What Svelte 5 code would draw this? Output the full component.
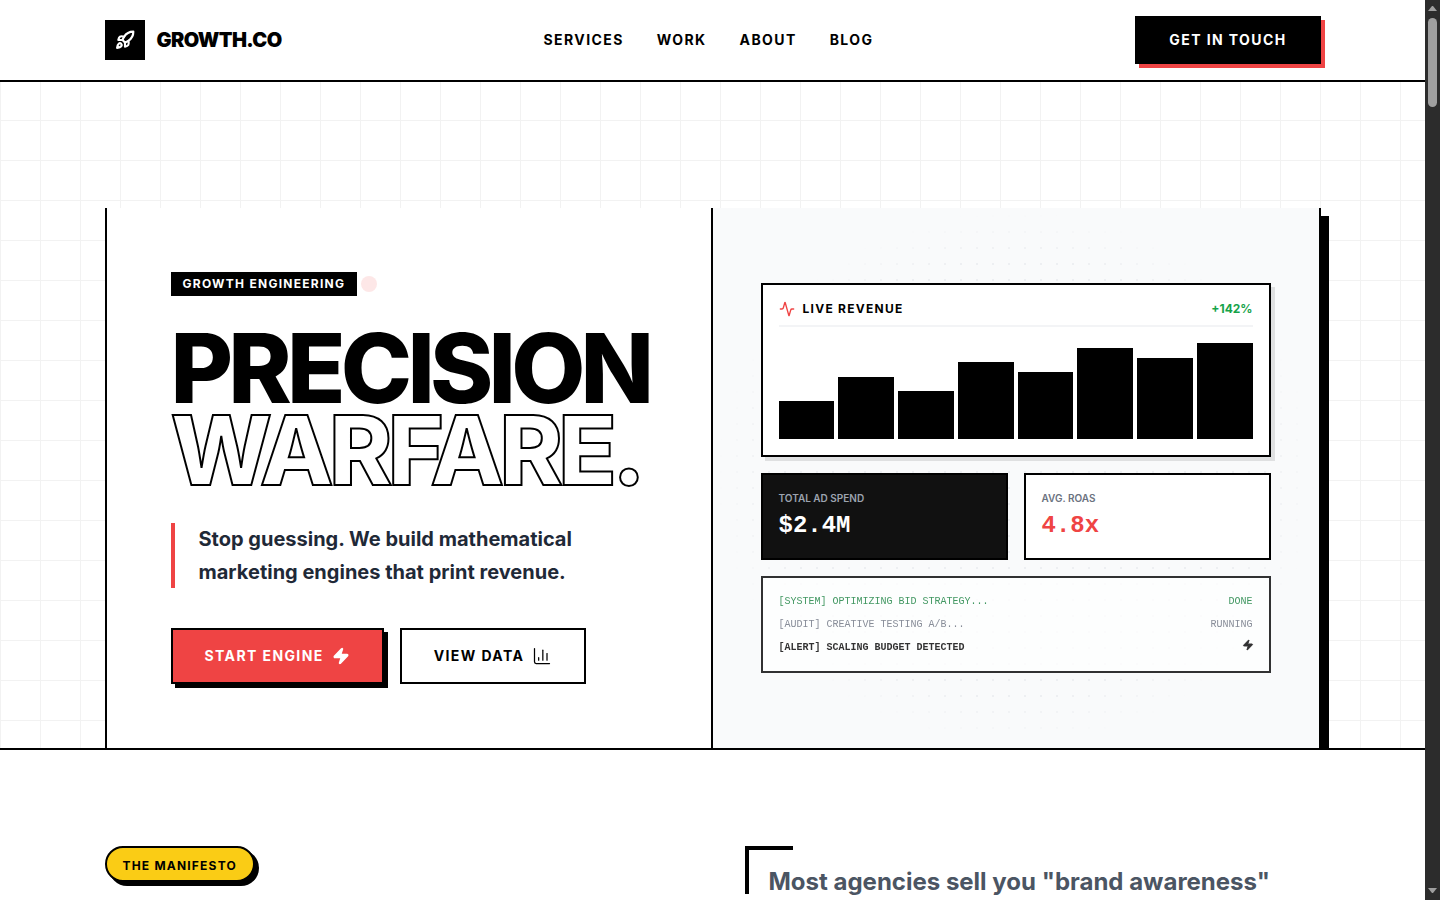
<script>
  const links = ['Services', 'Work', 'About', 'Blog'];
  const bars = [40, 65, 50, 80, 70, 95, 85, 100];
</script>

<div class="page">
<header class="nav">
  <div class="nav-inner">
    <a class="logo" href="#top">
      <span class="logo-box">
        <svg viewBox="0 0 24 24" width="20" height="20" fill="none" stroke="#fff" stroke-width="2.6" stroke-linecap="round" stroke-linejoin="round">
          <path d="M4.5 16.5c-1.5 1.26-2 5-2 5s3.74-.5 5-2c.71-.84.7-2.13-.09-2.91a2.18 2.18 0 0 0-2.91-.09z"/>
          <path d="m12 15-3-3a22 22 0 0 1 2-3.95A12.88 12.88 0 0 1 22 2c0 2.72-.78 7.5-6 11a22.35 22.35 0 0 1-4 2z"/>
          <path d="M9 12H4s.55-3.03 2-4c1.62-1.08 5 0 5 0"/>
          <path d="M12 15v5s3.03-.55 4-2c1.08-1.62 0-5 0-5"/>
        </svg>
      </span>
      <span class="logo-text">GROWTH.CO</span>
    </a>
    <nav class="links">
      {#each links as l}<a href="#top">{l}</a>{/each}
    </nav>
    <button class="cta">GET IN TOUCH</button>
  </div>
</header>

<section class="hero">
  <div class="card">
    <div class="left">
      <div class="tag-row">
        <span class="tag">GROWTH ENGINEERING</span>
        <span class="ping"></span>
      </div>
      <h1>PRECISION<br /><span class="outline">WARFARE.</span></h1>
      <p class="lead">Stop guessing. We build mathematical marketing engines that print revenue.</p>
      <div class="actions">
        <button class="btn primary">
          START ENGINE
          <svg viewBox="0 0 24 24" width="18" height="18" fill="#fff" stroke="#fff" stroke-width="2" stroke-linecap="round" stroke-linejoin="round">
            <path d="M4 14a1 1 0 0 1-.78-1.63l9.9-10.2a.5.5 0 0 1 .86.46l-1.92 6.02A1 1 0 0 0 13 10h7a1 1 0 0 1 .78 1.63l-9.9 10.2a.5.5 0 0 1-.86-.46l1.92-6.02A1 1 0 0 0 11 14z"/>
          </svg>
        </button>
        <button class="btn ghost">
          VIEW DATA
          <svg viewBox="0 0 24 24" width="20" height="20" fill="none" stroke="#000" stroke-width="1.5" stroke-linecap="round" stroke-linejoin="round">
            <path d="M3 3v16a2 2 0 0 0 2 2h16"/><path d="M18 17V9"/><path d="M13 17V5"/><path d="M8 17v-3"/>
          </svg>
        </button>
      </div>
    </div>

    <div class="right">
      <div class="dots"></div>
      <div class="stack">
        <div class="panel chart">
          <div class="chart-head">
            <span class="chart-title">
              <svg viewBox="0 0 24 24" width="16" height="16" fill="none" stroke="#ef4444" stroke-width="2" stroke-linecap="round" stroke-linejoin="round">
                <path d="M22 12h-2.48a2 2 0 0 0-1.93 1.46l-2.35 8.36a.25.25 0 0 1-.48 0L9.24 2.18a.25.25 0 0 0-.48 0l-2.35 8.36A2 2 0 0 1 4.49 12H2"/>
              </svg>
              LIVE REVENUE
            </span>
            <span class="delta">+142%</span>
          </div>
          <div class="bars">
            {#each bars as b}<div class="bar" style="height:{b}%"></div>{/each}
          </div>
        </div>

        <div class="stats">
          <div class="stat dark">
            <div class="stat-label">TOTAL AD SPEND</div>
            <div class="stat-value">$2.4M</div>
          </div>
          <div class="stat">
            <div class="stat-label">AVG. ROAS</div>
            <div class="stat-value red">4.8x</div>
          </div>
        </div>

        <div class="log">
          <div class="row green"><span>[SYSTEM] OPTIMIZING BID STRATEGY...</span><span>DONE</span></div>
          <div class="row gray"><span>[AUDIT] CREATIVE TESTING A/B...</span><span>RUNNING</span></div>
          <div class="row strong">
            <span>[ALERT] SCALING BUDGET DETECTED</span>
            <svg viewBox="0 0 24 24" width="12" height="12" fill="#000" stroke="#000" stroke-width="2" stroke-linecap="round" stroke-linejoin="round">
              <path d="M4 14a1 1 0 0 1-.78-1.63l9.9-10.2a.5.5 0 0 1 .86.46l-1.92 6.02A1 1 0 0 0 13 10h7a1 1 0 0 1 .78 1.63l-9.9 10.2a.5.5 0 0 1-.86-.46l1.92-6.02A1 1 0 0 0 11 14z"/>
            </svg>
          </div>
        </div>
      </div>
    </div>
  </div>
</section>

<section class="manifesto">
  <div class="manifesto-left"><span class="pill">THE MANIFESTO</span></div>
  <div class="manifesto-right">
    <span class="bracket"></span>
    <p>Most agencies sell you "brand awareness" campaigns and hope the numbers follow. We start with the numbers.</p>
  </div>
</section>
</div>

<div class="scrollbar" aria-hidden="true">
  <span class="arrow up"></span>
  <span class="track"><span class="thumb"></span></span>
  <span class="arrow down"></span>
</div>

<style>
  :global(body) {
    margin: 0;
    background: #fff;
    color: #000;
    font-family: Inter, "Liberation Sans", sans-serif;
  }
  .page {
    margin-right: 15px;
  }
  .scrollbar {
    position: fixed;
    top: 0;
    right: 0;
    bottom: 0;
    width: 15px;
    background: #2c2c2c;
    display: flex;
    flex-direction: column;
    align-items: center;
  }
  .arrow {
    flex: none;
    width: 9px;
    height: 5px;
    box-sizing: border-box;
    border-left: 4.5px solid transparent;
    border-right: 4.5px solid transparent;
  }
  .arrow.up {
    margin-top: 6px;
    margin-bottom: 7px;
    border-bottom: 5px solid #9f9f9f;
  }
  .arrow.down {
    margin-top: 7px;
    margin-bottom: 7px;
    border-top: 5px solid #9f9f9f;
  }
  .track {
    flex: 1;
    width: 100%;
    display: flex;
    justify-content: center;
  }
  .thumb {
    width: 9px;
    height: 89px;
    border-radius: 5px;
    background: #9f9f9f;
  }
  a {
    color: inherit;
    text-decoration: none;
  }
  button {
    font-family: inherit;
    cursor: pointer;
  }

  .nav {
    height: 80px;
    background: #fff;
    border-bottom: 2px solid #000;
  }
  .nav-inner {
    max-width: 1216px;
    height: 100%;
    margin: 0 auto;
    display: flex;
    align-items: center;
    justify-content: space-between;
  }
  .logo {
    display: flex;
    align-items: center;
    gap: 12px;
  }
  .logo-box {
    width: 40px;
    height: 40px;
    background: #000;
    display: flex;
    align-items: center;
    justify-content: center;
  }
  .logo-text {
    font-size: 20px;
    font-weight: 900;
    letter-spacing: -0.6px;
  }
  .links {
    display: flex;
    gap: 33px;
  }
  .links a {
    padding-bottom: 2px;
    font-size: 14px;
    font-weight: 700;
    letter-spacing: 1.4px;
    text-transform: uppercase;
  }
  .cta {
    height: 48px;
    padding: 0 32px 2px;
    border: 2px solid #000;
    background: #000;
    color: #fff;
    font-size: 14px;
    font-weight: 700;
    letter-spacing: 1.4px;
    box-shadow: 4px 4px 0 #ef4444;
  }

  .hero {
    height: 666px;
    overflow: hidden;
    border-bottom: 2px solid #000;
    background-color: #fff;
    background-image:
      linear-gradient(#f2f2f2 1px, transparent 1px),
      linear-gradient(90deg, #f2f2f2 1px, transparent 1px);
    background-size: 40px 40px;
    background-position: 0 -2px;
    display: flex;
    flex-direction: column;
    justify-content: flex-end;
  }
  .card {
    box-sizing: border-box;
    width: 1216px;
    height: 540px;
    margin: 0 auto;
    background: #fff;
    border-left: 2px solid #000;
    border-right: 2px solid #000;
    box-shadow: 8px 8px 0 #000;
    display: grid;
    grid-template-columns: minmax(0, 1fr) minmax(0, 1fr);
  }
  .left {
    padding: 64px;
    border-right: 2px solid #000;
    display: flex;
    flex-direction: column;
    justify-content: center;
    align-items: flex-start;
  }
  .tag-row {
    position: relative;
    margin-bottom: 32px;
  }
  .tag {
    display: block;
    padding: 0 12px;
    background: #000;
    color: #fff;
    font-size: 12px;
    line-height: 24px;
    font-weight: 700;
    letter-spacing: 1.26px;
  }
  .ping {
    position: absolute;
    left: calc(100% + 4px);
    top: 4px;
    width: 16px;
    height: 16px;
    border-radius: 50%;
    background: #ef4444;
    opacity: 0.13;
  }
  h1 {
    margin: 0 0 32px;
    white-space: nowrap;
    font-size: 96px;
    line-height: 0.85;
    font-weight: 800;
    letter-spacing: -4.8px;
  }
  .outline {
    color: transparent;
    -webkit-text-stroke: 2px #000;
  }
  .lead {
    margin: 0 0 40px;
    padding-left: 24px;
    border-left: 4px solid #ef4444;
    max-width: 420px;
    font-size: 20px;
    line-height: 32.5px;
    font-weight: 700;
    color: #1f2937;
  }
  .actions {
    display: flex;
    gap: 16px;
  }
  .btn {
    display: flex;
    align-items: center;
    gap: 8px;
    height: 56px;
    padding: 0 32px 2px;
    border: 2px solid #000;
    font-size: 14px;
    font-weight: 700;
    letter-spacing: 1.4px;
  }
  .btn svg {
    margin-top: 2px;
  }
  .primary {
    background: #ef4444;
    color: #fff;
    box-shadow: 4px 4px 0 #000;
  }
  .ghost {
    background: #fff;
    color: #000;
  }

  .right {
    position: relative;
    background: #f9fafb;
    padding: 48px;
    display: flex;
    flex-direction: column;
    justify-content: center;
  }
  .dots {
    position: absolute;
    inset: 0;
    opacity: 0.55;
    background-image: radial-gradient(#e5e7eb 1px, transparent 1px);
    background-size: 16px 16px;
    -webkit-mask-image: radial-gradient(ellipse at center, #000 58%, transparent 70%);
    mask-image: radial-gradient(ellipse at center, #000 58%, transparent 70%);
  }
  .stack {
    position: relative;
    display: flex;
    flex-direction: column;
    gap: 16px;
  }
  .panel {
    background: #fff;
    border: 2px solid #000;
    padding: 16px;
    box-shadow: 4px 4px 0 rgba(0, 0, 0, 0.1);
  }
  .chart-head {
    display: flex;
    align-items: flex-start;
    justify-content: space-between;
    padding-bottom: 8px;
    margin-bottom: 16px;
    border-bottom: 2px solid #f3f4f6;
  }
  .chart-title {
    display: flex;
    align-items: center;
    gap: 8px;
    font-size: 12px;
    line-height: 16px;
    font-weight: 700;
    letter-spacing: 1.26px;
  }
  .delta {
    font-size: 12px;
    line-height: 16px;
    font-weight: 700;
    color: #16a34a;
  }
  .bars {
    height: 96px;
    display: flex;
    align-items: flex-end;
    gap: 4px;
  }
  .bar {
    flex: 1;
    background: #000;
  }
  .stats {
    display: grid;
    grid-template-columns: 1fr 1fr;
    gap: 16px;
  }
  .stat {
    background: #fff;
    border: 2px solid #000;
    padding: 16px;
    height: 87px;
    box-sizing: border-box;
  }
  .stat.dark {
    background: #111;
    color: #fff;
  }
  .stat-label {
    font-size: 10px;
    line-height: 15px;
    font-weight: 600;
    color: #6b7280;
    margin-bottom: 4px;
  }
  .dark .stat-label {
    color: #9ca3af;
  }
  .stat-value {
    font-family: "Liberation Mono", monospace;
    font-size: 24px;
    line-height: 32px;
    font-weight: 700;
  }
  .red {
    color: #ef4444;
  }
  .log {
    background: #fff;
    border: 2px solid #000;
    padding: 16px;
    opacity: 0.8;
    display: flex;
    flex-direction: column;
    gap: 8px;
    font-family: "Liberation Mono", monospace;
    font-size: 10px;
    line-height: 15px;
  }
  .row {
    display: flex;
    align-items: center;
    justify-content: space-between;
  }
  .row svg {
    align-self: flex-start;
    margin: -1px -1px 0 0;
  }
  .green {
    color: #15803d;
  }
  .gray {
    color: #6b7280;
  }
  .strong {
    font-weight: 700;
    color: #000;
  }

  .manifesto {
    width: 1216px;
    margin: 0 auto;
    padding: 96px 0;
    box-sizing: border-box;
    display: grid;
    grid-template-columns: minmax(0, 1fr) minmax(0, 1fr);
    column-gap: 64px;
    align-content: start;
  }
  .manifesto-left {
    align-self: start;
  }
  .pill {
    display: inline-block;
    padding: 10px 16px 6px;
    background: #facc15;
    border: 2px solid #000;
    border-radius: 999px;
    box-shadow: 4px 4px 0 #000;
    font-size: 12px;
    line-height: 16px;
    font-weight: 700;
    letter-spacing: 1.2px;
  }
  .manifesto-right {
    position: relative;
    padding: 16px 0 0 24px;
  }
  .bracket {
    position: absolute;
    left: 0;
    top: 0;
    width: 48px;
    height: 48px;
    box-sizing: border-box;
    border-top: 4px solid #000;
    border-left: 4px solid #000;
  }
  .manifesto-right p {
    margin: 0;
    font-size: 24px;
    line-height: 1.625;
    font-weight: 700;
    color: #4b5563;
  }
</style>
